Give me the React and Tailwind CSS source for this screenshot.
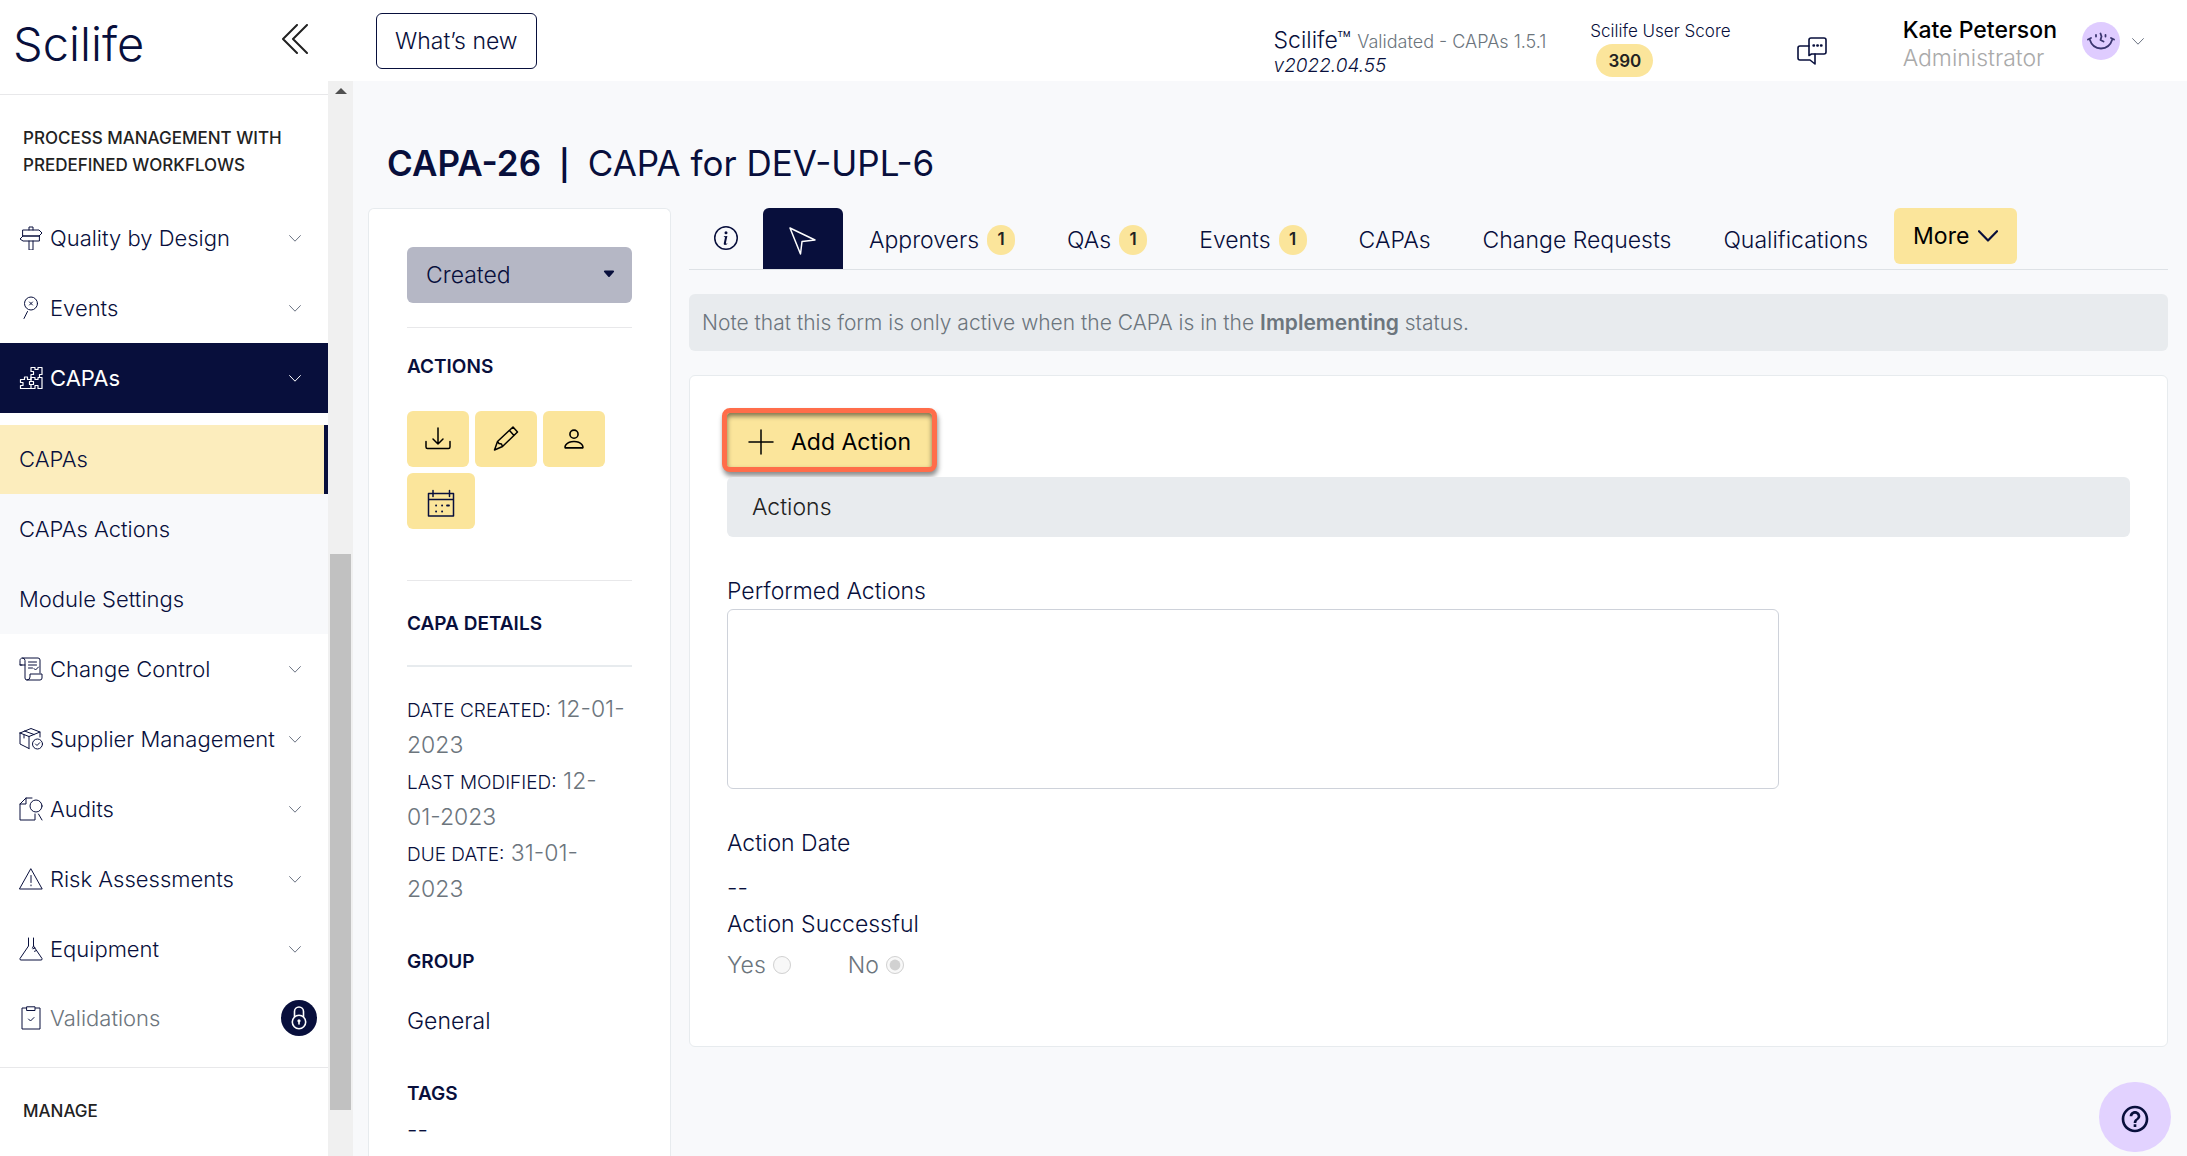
import React, { useState } from "react";
import { BsInfoCircle, BsPerson, BsCaretDownFill } from "react-icons/bs";
import { MdHelpOutline } from "react-icons/md";

// shared wrapper for the thin line icons
function Line({ children, className = "size-6", width = 1, box = "0 0 24 24" }) {
  return (
    <svg
      viewBox={box}
      className={className}
      fill="none"
      stroke="currentColor"
      strokeWidth={width}
      strokeLinecap="round"
      strokeLinejoin="round"
      aria-hidden="true"
    >
      {children}
    </svg>
  );
}

function Chevron({ className = "w-3 h-[7px]", width = 1 }) {
  return (
    <Line className={className} width={width} box="0 0 12 7">
      <path d="M.6.6 6 6.2 11.4.6" />
    </Line>
  );
}

const icons = {
  sign: (
    <Line>
      <path d="M10 4V1h4v3M4 4h16l3 3-3 3H4zM20 10H4l-3 3 3 2h16zM10 15v9h4v-9" />
    </Line>
  ),
  events: (
    <Line>
      <circle cx="12" cy="7.5" r="6.5" />
      <path d="m10.500 6 3 3m0-3-3 3M8.500 15.500 5 22.500" />
    </Line>
  ),
  puzzle: (
    <Line width={1.2}>
      <path d="M12 1.500h4v2h3v-2h4v7h-2.500v3H23v11h-4v-3h-3v3h-4v-4h2.500v-3H12v-4h4v2h3v-2h4M12 1.500v4h2.500v3H12v3" />
      <path d="M12 11.500v2H8.500v-2.500h-3v2.500h-4v3H4v3H1.500v3H12M12 15.500h-1.500v3H12" />
    </Line>
  ),
  change: (
    <Line>
      <path d="M3 8H1V3.500C1 2 2 1 3.500 1H19q2 0 2 2v13M3.500 1Q6 1 6 3.500V21q0 2 2 2h13q2 0 2-2v-4H11v3q0 3-3 3M1 8h5M9.500 5h8M9.500 8h8M9.500 11h4M15 11.500l1.500 1.500 3-3" />
    </Line>
  ),
  supplier: (
    <Line>
      <path d="M1 6 12 1.500 21 5v5M1 6l9 3.500L21 5M1 6v11l9 4.500M10 9.500v12M5.500 4 15 7.500M5 8v3" />
      <circle cx="18.5" cy="17" r="5" />
      <path d="m16.500 17 1.500 1.500 2.700-2.800" />
    </Line>
  ),
  audits: (
    <Line>
      <path d="M13 1H7L1 7v16h15v-6M7 1v6H1" />
      <circle cx="17" cy="9" r="6" />
      <path d="m19.500 17 3.500 6" />
    </Line>
  ),
  risk: (
    <Line>
      <path d="M12 2 23.200 22H.8zM12 8.500v7M12 18v.8" />
    </Line>
  ),
  equipment: (
    <Line>
      <path d="M9.500 1v8L1 21.500q-.5 1.500 1 1.500h20q1.500 0 1-1.500L14.500 9V1M14.500 9l-1 2M16 11l-2 .8M17.500 13.500l-2 .8" />
    </Line>
  ),
  validations: (
    <Line>
      <path d="M7.500 2H3v21h18V2h-4.500M8 .8h8v3.700H8zM9.500 13l2 2 3.500-3.500" />
    </Line>
  ),
};

const topItems = [
  { name: "Quality by Design", icon: "sign" },
  { name: "Events", icon: "events" },
  { name: "CAPAs", icon: "puzzle", active: true },
];

const bottomItems = [
  { name: "Change Control", icon: "change" },
  { name: "Supplier Management", icon: "supplier" },
  { name: "Audits", icon: "audits" },
  { name: "Risk Assessments", icon: "risk" },
  { name: "Equipment", icon: "equipment" },
];

const tabs = [
  { name: "Approvers", count: 1 },
  { name: "QAs", count: 1 },
  { name: "Events", count: 1 },
  { name: "CAPAs" },
  { name: "Change Requests" },
  { name: "Qualifications" },
];

function NavItem({ item }) {
  return (
    <a
      href="#"
      className={`flex h-[70px] items-center pl-[19px] pr-[27px] ${
        item.active ? "bg-[#080f3c] font-normal text-white" : "text-[#080f3c]"
      }`}
    >
      {icons[item.icon]}
      <span className="ml-[7px] flex-1 whitespace-nowrap">{item.name}</span>
      <span className={item.active ? "text-white" : "text-gray-500"}>
        <Chevron />
      </span>
    </a>
  );
}

function Sidebar() {
  return (
    <aside className="flex w-[353px] shrink-0 overflow-hidden bg-white text-[22px]">
      <div className="w-[328px]">
        <div className="flex h-[95px] items-start justify-between border-b border-[#e8e8ea] pl-[13px] pr-5">
          <a href="#" className="mt-4 text-[47px] leading-[56px] font-light">
            Scilife
          </a>
          <button aria-label="Collapse menu" className="mt-6 text-[#222]">
            <Line className="h-[30px] w-[26px]" width={2} box="0 0 26 30">
              <path d="M15 1 1 15l14 14M25 1 11 15l14 14" />
            </Line>
          </button>
        </div>

        <h2 className="mt-[30px] mb-6 pl-[23px] text-[17px] leading-[27px] font-medium text-[#222]">
          PROCESS MANAGEMENT WITH
          <br />
          PREDEFINED WORKFLOWS
        </h2>

        <nav>
          {topItems.map((item) => (
            <NavItem key={item.name} item={item} />
          ))}
          <div className="mt-3 bg-[#f8f9fb]">
            <a href="#" className="flex h-[69px] items-center border-r-4 border-[#080f3c] bg-[#fcedbd] pl-[19px]">
              CAPAs
            </a>
            <a href="#" className="flex h-[70px] items-center pl-[19px]">
              CAPAs Actions
            </a>
            <a href="#" className="flex h-[70px] items-center pl-[19px]">
              Module Settings
            </a>
          </div>
          {bottomItems.map((item) => (
            <NavItem key={item.name} item={item} />
          ))}
          <a href="#" className="flex h-[68px] items-center pl-[19px] pr-[11px]">
            {icons.validations}
            <span className="ml-[7px] flex-1 text-[#6c757d]">Validations</span>
            <span className="flex size-9 items-center justify-center rounded-full bg-[#080f3c] text-white">
              <Line width={1.6}>
                <path d="M7.500 10.500V5.500a4.500 4.500 0 0 1 9 0v5" />
                <circle cx="12" cy="16" r="6.7" />
                <circle cx="12" cy="14.8" r=".8" />
                <path d="M12 15v3" />
              </Line>
            </span>
          </a>
        </nav>

        <h2 className="mt-[15px] border-t border-[#e8e8ea] pt-[30px] pl-[23px] text-[17px] leading-[27px] font-medium text-[#222]">
          MANAGE
        </h2>
      </div>

      {/* scroll track */}
      <div className="mt-[81px] flex flex-1 flex-col items-center bg-[#f0f0f0]">
        <svg viewBox="0 0 12 6" className="mt-[7px] mb-[11px] h-[6px] w-3 shrink-0" fill="#505050" aria-hidden="true">
          <path d="M6 0l6 6H0z" />
        </svg>
        <div className="flex-[449]" />
        <div className="w-[21px] flex-[556] bg-[#c1c1c1]" />
        <div className="flex-[46]" />
      </div>
    </aside>
  );
}

function Header() {
  return (
    <header className="flex h-[81px] shrink-0 items-start bg-white pl-[23px] pr-[43px]">
      <button className="mt-[13px] h-14 rounded-md border border-[#080f3c] px-[18px]">What’s new</button>

      <div className="mt-7 ml-auto leading-[25px]">
        <div>
          Scilife™ <span className="text-[18px] leading-none text-[#6c757d]">Validated - CAPAs 1.5.1</span>
        </div>
        <div className="text-[19px] italic">v2022.04.55</div>
      </div>

      <div className="mt-[18px] ml-11 text-[17px] leading-[26px]">
        <div>Scilife User Score</div>
        <span className="ml-[6px] flex h-[33px] w-[57px] items-center justify-center rounded-full bg-[#fbe59b] font-semibold text-[#222]">
          390
        </span>
      </div>

      <button aria-label="Messages" className="mt-[37px] ml-[66px]">
        <Line className="h-7 w-[30px]" width={1.6} box="0 0 30 28">
          <path d="M14 1h13q2 0 2 2v12q0 2-2 2H14.500L12 18.500V3q0-2 2-2z" />
          <path d="M12 9H3q-2 0-2 2v10q0 2 2 2h10l5 4V17" />
          <path d="M16.500 8.500h.5M20.300 8.500h.5M24 8.500h.5" strokeWidth="2.4" />
        </Line>
      </button>

      <div className="mt-4 ml-[76px] leading-7">
        <div className="font-medium text-black">Kate Peterson</div>
        <div className="text-[#aaaaaa]">Administrator</div>
      </div>
      <button aria-label="Account menu" className="mt-[22px] ml-[25px] flex items-center gap-3 text-gray-500">
        <span className="flex size-[38px] items-center justify-center rounded-full bg-[#dfccff] text-[#3b3670]">
          <Line className="h-[18px] w-[28px]" width={1.8} box="0 0 28 18">
            <path d="M1 7.500 4 6M27 7.500 24 6M2.500 7q3 9.500 11.500 9.500T25.500 7M9 3v1.500M18.500 3v1.500M13.500 1.500l1 3-1 3.500 3 1.500" />
          </Line>
        </span>
        <Chevron />
      </button>
    </header>
  );
}

function ActionButton({ label, wide, children }) {
  return (
    <button
      aria-label={label}
      className={`flex h-14 items-center justify-center rounded-md bg-[#fbe59b] ${wide ? "w-[68px]" : "w-[62px]"}`}
    >
      {children}
    </button>
  );
}

function DateLine({ label, first, rest }) {
  return (
    <p className="whitespace-nowrap">
      <span className="text-[19px] leading-none">{label}:</span>{" "}
      <span className="text-[#6c757d]">
        {first}
        <br />
        {rest}
      </span>
    </p>
  );
}

function DetailsCard() {
  const [status, setStatus] = useState("Created");

  return (
    <section className="w-[303px] shrink-0 rounded-t-md border border-b-0 border-[#e7ebee] bg-white px-[38px] pt-[38px]">
      <div className="relative">
        <select
          aria-label="Status"
          value={status}
          onChange={(e) => setStatus(e.target.value)}
          className="h-14 w-full appearance-none rounded-md bg-[#b5b7c5] pl-[19px] text-[#080f3c]"
        >
          <option>Created</option>
          <option>Implementing</option>
          <option>Closed</option>
        </select>
        <BsCaretDownFill className="pointer-events-none absolute top-5 right-4 size-[14px]" />
      </div>

      <hr className="mt-6 border-[#e8e8ea]" />
      <h3 className="mt-[21px] text-[19px] leading-9 font-semibold">ACTIONS</h3>
      <div className="mt-[26px] flex flex-wrap gap-[6px] text-black">
        <ActionButton label="Download">
          <Line className="size-[26px]" width={1.5} box="0 0 26 26">
            <path d="M13 2v16M8 13l5 5 5-5M1 15.500V21q0 1.500 1.500 1.500h21Q25 22.500 25 21v-5.500" />
          </Line>
        </ActionButton>
        <ActionButton label="Edit">
          <Line className="size-[26px]" width={1.5} box="0 0 26 26">
            <path d="M1.500 24 4.500 15.500 20 1l4.500 5L9.500 20.500zM16.500 4.500l4.500 5M4.500 15.500 6 17.500 8.500 18l1 2.500" />
          </Line>
        </ActionButton>
        <ActionButton label="Assign">
          <BsPerson className="size-[26px]" />
        </ActionButton>
        <ActionButton label="Schedule" wide>
          <Line className="mt-1 size-7 text-[#080f3c]" width={1.5} box="0 0 28 28">
            <path d="M1.500 4.500h25V27h-25zM1.500 10.500h25M6 1.500v6M22.500 1.500v6" />
            <path d="M9 16.500h.2M15 16.500h.2M20 16.500h2M9 22.500h.2M15 22.500h.2" strokeWidth="1.8" />
          </Line>
        </ActionButton>
      </div>

      <hr className="mt-[51px] border-[#e8e8ea]" />
      <h3 className="mt-[25px] text-[19px] leading-9 font-semibold">CAPA DETAILS</h3>
      <hr className="mt-[23px] border-t-2 border-[#e7ebee]" />
      <div className="mt-6 leading-9">
        <DateLine label="DATE CREATED" first="12-01-" rest="2023" />
        <DateLine label="LAST MODIFIED" first="12-" rest="01-2023" />
        <DateLine label="DUE DATE" first="31-01-" rest="2023" />
      </div>
      <h3 className="mt-[37px] text-[19px] leading-9 font-semibold">GROUP</h3>
      <p className="mt-[23px] leading-9">General</p>
      <h3 className="mt-[37px] text-[19px] leading-9 font-semibold">TAGS</h3>
      <p className="leading-9">--</p>
    </section>
  );
}

function Tabs() {
  return (
    <nav className="flex items-start border-b border-[#dee2e6]">
      <a href="#" aria-label="Info" className="flex h-[60px] items-center px-[25px]">
        <BsInfoCircle className="size-6" />
      </a>
      <a
        href="#"
        aria-label="Actions"
        className="flex h-[61px] items-center rounded-t-md bg-[#080f3c] px-[25px] pt-1 text-white"
      >
        <Line className="size-[30px]" width={1.5} box="0 0 30 30">
          <path d="m2 2 25 12-13 1.500L12.500 28z" />
        </Line>
      </a>
      {tabs.map((tab) => (
        <a key={tab.name} href="#" className="flex h-[60px] items-center px-[26px] pt-1 whitespace-nowrap">
          {tab.name}
          {tab.count && (
            <span className="ml-2 flex h-[30px] w-7 items-center justify-center rounded-full bg-[#fbe59b] text-[17px] font-semibold text-[#222]">
              {tab.count}
            </span>
          )}
        </a>
      ))}
      <button className="flex h-14 items-center gap-[9px] rounded-md bg-[#fbe59b] px-[19px] font-normal text-black">
        More
        <Chevron className="h-[12px] w-5 text-[#080f3c]" width={1.3} />
      </button>
    </nav>
  );
}

function ActionsForm() {
  return (
    <form className="mt-6 rounded-md border border-[#e7ebee] bg-white px-[37px] pt-8 pb-[63px]">
      <button
        type="button"
        className="-ml-[5px] flex h-16 items-center gap-[17px] rounded-lg border-[5px] border-[#ff6d4a] bg-[#fbe59b] px-[21px] pt-1 font-normal text-black shadow-[1px_4px_5px_rgba(0,0,0,0.45),inset_0_3px_5px_rgba(0,0,0,0.5)]"
      >
        <Line className="size-[26px]" width={1.5} box="0 0 26 26">
          <path d="M13 1v24M1 13h24" />
        </Line>
        Add Action
      </button>
      <h3 className="mt-[5px] flex h-[60px] items-center rounded-md bg-[#e8ebee] pl-[25px] text-[#222]">Actions</h3>

      <label htmlFor="performed" className="mt-9 block leading-9">
        Performed Actions
      </label>
      <textarea
        id="performed"
        className="block h-[180px] w-3/4 resize-none rounded-md border border-[#ced2da] bg-white"
      />

      <p className="mt-9 leading-9">Action Date</p>
      <p className="mt-[9px] leading-9">--</p>
      <fieldset disabled>
        <legend className="leading-9">Action Successful</legend>
        <div className="mt-[5px] flex gap-[57px] leading-9 text-[#6c757d]">
          <label className="flex items-center gap-[7px]">
            Yes
            <input type="radio" name="successful" className="size-[18px]" />
          </label>
          <label className="flex items-center gap-[7px]">
            No
            <input type="radio" name="successful" defaultChecked className="size-[18px]" />
          </label>
        </div>
      </fieldset>
    </form>
  );
}

function App() {
  return (
    <div className="flex h-screen overflow-hidden bg-[#f8f9fb] font-['Inter',sans-serif] text-[23px] font-[350] text-[#080f3c]">
      <Sidebar />
      <div className="flex min-w-0 flex-1 flex-col">
        <Header />
        <main className="flex min-h-0 flex-1 flex-col pl-[15px] pr-[19px] pt-[58px]">
          <h1 className="pl-[19px] text-[35px] leading-[48px] font-normal">
            <b className="font-semibold">
              CAPA-26<span className="mx-[18px] text-[30px] leading-none">|</span>
            </b>
            CAPA for DEV-UPL-6
          </h1>
          <div className="mt-[21px] flex min-h-0 flex-1 gap-[18px]">
            <DetailsCard />
            <div className="min-w-0 flex-1">
              <Tabs />
              <p className="mt-6 rounded-md bg-[#e8ebee] px-[13px] py-[14px] text-[21px] leading-[29px] text-[#6c757d]">
                Note that this form is only active when the CAPA is in the{" "}
                <b className="font-semibold">Implementing</b> status.
              </p>
              <ActionsForm />
            </div>
          </div>
        </main>
      </div>
      <button
        aria-label="Help"
        className="fixed right-4 bottom-1 flex h-[70px] w-[72px] items-center justify-center rounded-full bg-[#e2d2ff] pt-1"
      >
        <MdHelpOutline className="size-8" />
      </button>
    </div>
  );
}

export default App;
